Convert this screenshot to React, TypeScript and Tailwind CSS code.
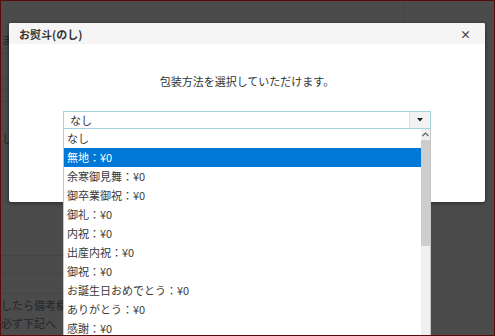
import React from "react";

const options = [
  "なし",
  "無地：¥0",
  "余寒御見舞：¥0",
  "御卒業御祝：¥0",
  "御礼：¥0",
  "内祝：¥0",
  "出産内祝：¥0",
  "御祝：¥0",
  "お誕生日おめでとう：¥0",
  "ありがとう：¥0",
  "感謝：¥0",
];

const font = { fontFamily: '"Noto Sans CJK JP", "Noto Sans", sans-serif' };

function Backdrop() {
  // faint page behind the overlay
  return (
    <div className="flex h-full w-full">
      <div className="w-[404px] h-full border-r border-[#474747] flex flex-col text-[11px] leading-[16px] text-[#262626]">
        <div className="h-[52px] pt-[30px] pl-[1px]">ま</div>
        <div className="h-[25px] border-t border-[#444]" />
        <div className="h-[11px] border-t border-[#444]" />
        <div className="h-[12px] border-t border-[#444]" />
        <div className="h-[27px] border-t border-[#444]" />
        <div className="h-[30px] pl-[1px] pt-[2px]">し</div>
        <div className="h-[98px] border-b border-[#444]" />
        <div className="h-[18px] border-b border-[#444]" />
        <div className="h-[20px] border-b border-[#444]" />
        <div className="h-[20px] pt-[3px] whitespace-nowrap">したら備考欄を</div>
        <div className="pt-[1px] whitespace-nowrap">必ず下記へ</div>
      </div>
    </div>
  );
}

function Dropdown() {
  return (
    <div className="absolute left-0 top-[18px] w-[368px] h-[220px] bg-white border-x border-[#c4c4c4] flex">
      <div className="flex-1 flex flex-col">
        {options.map((o, i) => (
          <div
            key={o}
            className={
              "h-[19px] shrink-0 flex items-center pl-[3px] text-[11px] " +
              (i === 1 ? "bg-[#0078d7] text-white" : "text-[#3a3a3a]")
            }
          >
            {o}
          </div>
        ))}
      </div>
      <div className="w-[9px] bg-[#f0f0f0] flex flex-col">
        <div className="h-[11px] flex items-center justify-center">
          <svg width="7" height="5" viewBox="0 0 7 5">
            <path d="M0.5 4 L3.5 1 L6.5 4" fill="none" stroke="#606060" strokeWidth="1.2" />
          </svg>
        </div>
        <div className="h-[106px] bg-[#cdcdcd]" />
      </div>
    </div>
  );
}

export default function App() {
  return (
    <div
      className="relative w-[495px] h-[336px] overflow-hidden bg-[#4b4b4b] border border-[#5a0c0c]"
      style={font}
    >
      <Backdrop />

      <div className="absolute left-[8px] top-[22px] w-[476px] h-[179px] bg-white rounded-[2px] shadow-[0_1px_4px_rgba(0,0,0,0.5)]">
        <div className="h-[21px] bg-[#f5f5f5] rounded-t-[2px] flex items-center justify-between pl-[10px] pr-[14px] pt-[1px]">
          <span className="text-[11px] font-bold text-[#333]">お熨斗(のし)</span>
          <span className="text-[11px] font-bold leading-none text-[#444]">×</span>
        </div>

        <div className="pt-[29px] text-center text-[11px] leading-[16px] text-[#333]">
          包装方法を選択していただけます。
        </div>

        <div className="relative mt-[22px] ml-[54px] w-[368px]">
          <div className="h-[18px] border border-[#a3d3e2] flex">
            <div className="flex-1 flex items-center pl-[6px] text-[11px] text-[#333]">なし</div>
            <div className="w-[21px] bg-[#f2f2f2] border-l border-[#e0e0e0] flex items-center justify-center">
              <svg width="6" height="4" viewBox="0 0 6 4">
                <path d="M0 0 H6 L3 3.5 Z" fill="#222" />
              </svg>
            </div>
          </div>
          <Dropdown />
        </div>
      </div>
    </div>
  );
}
